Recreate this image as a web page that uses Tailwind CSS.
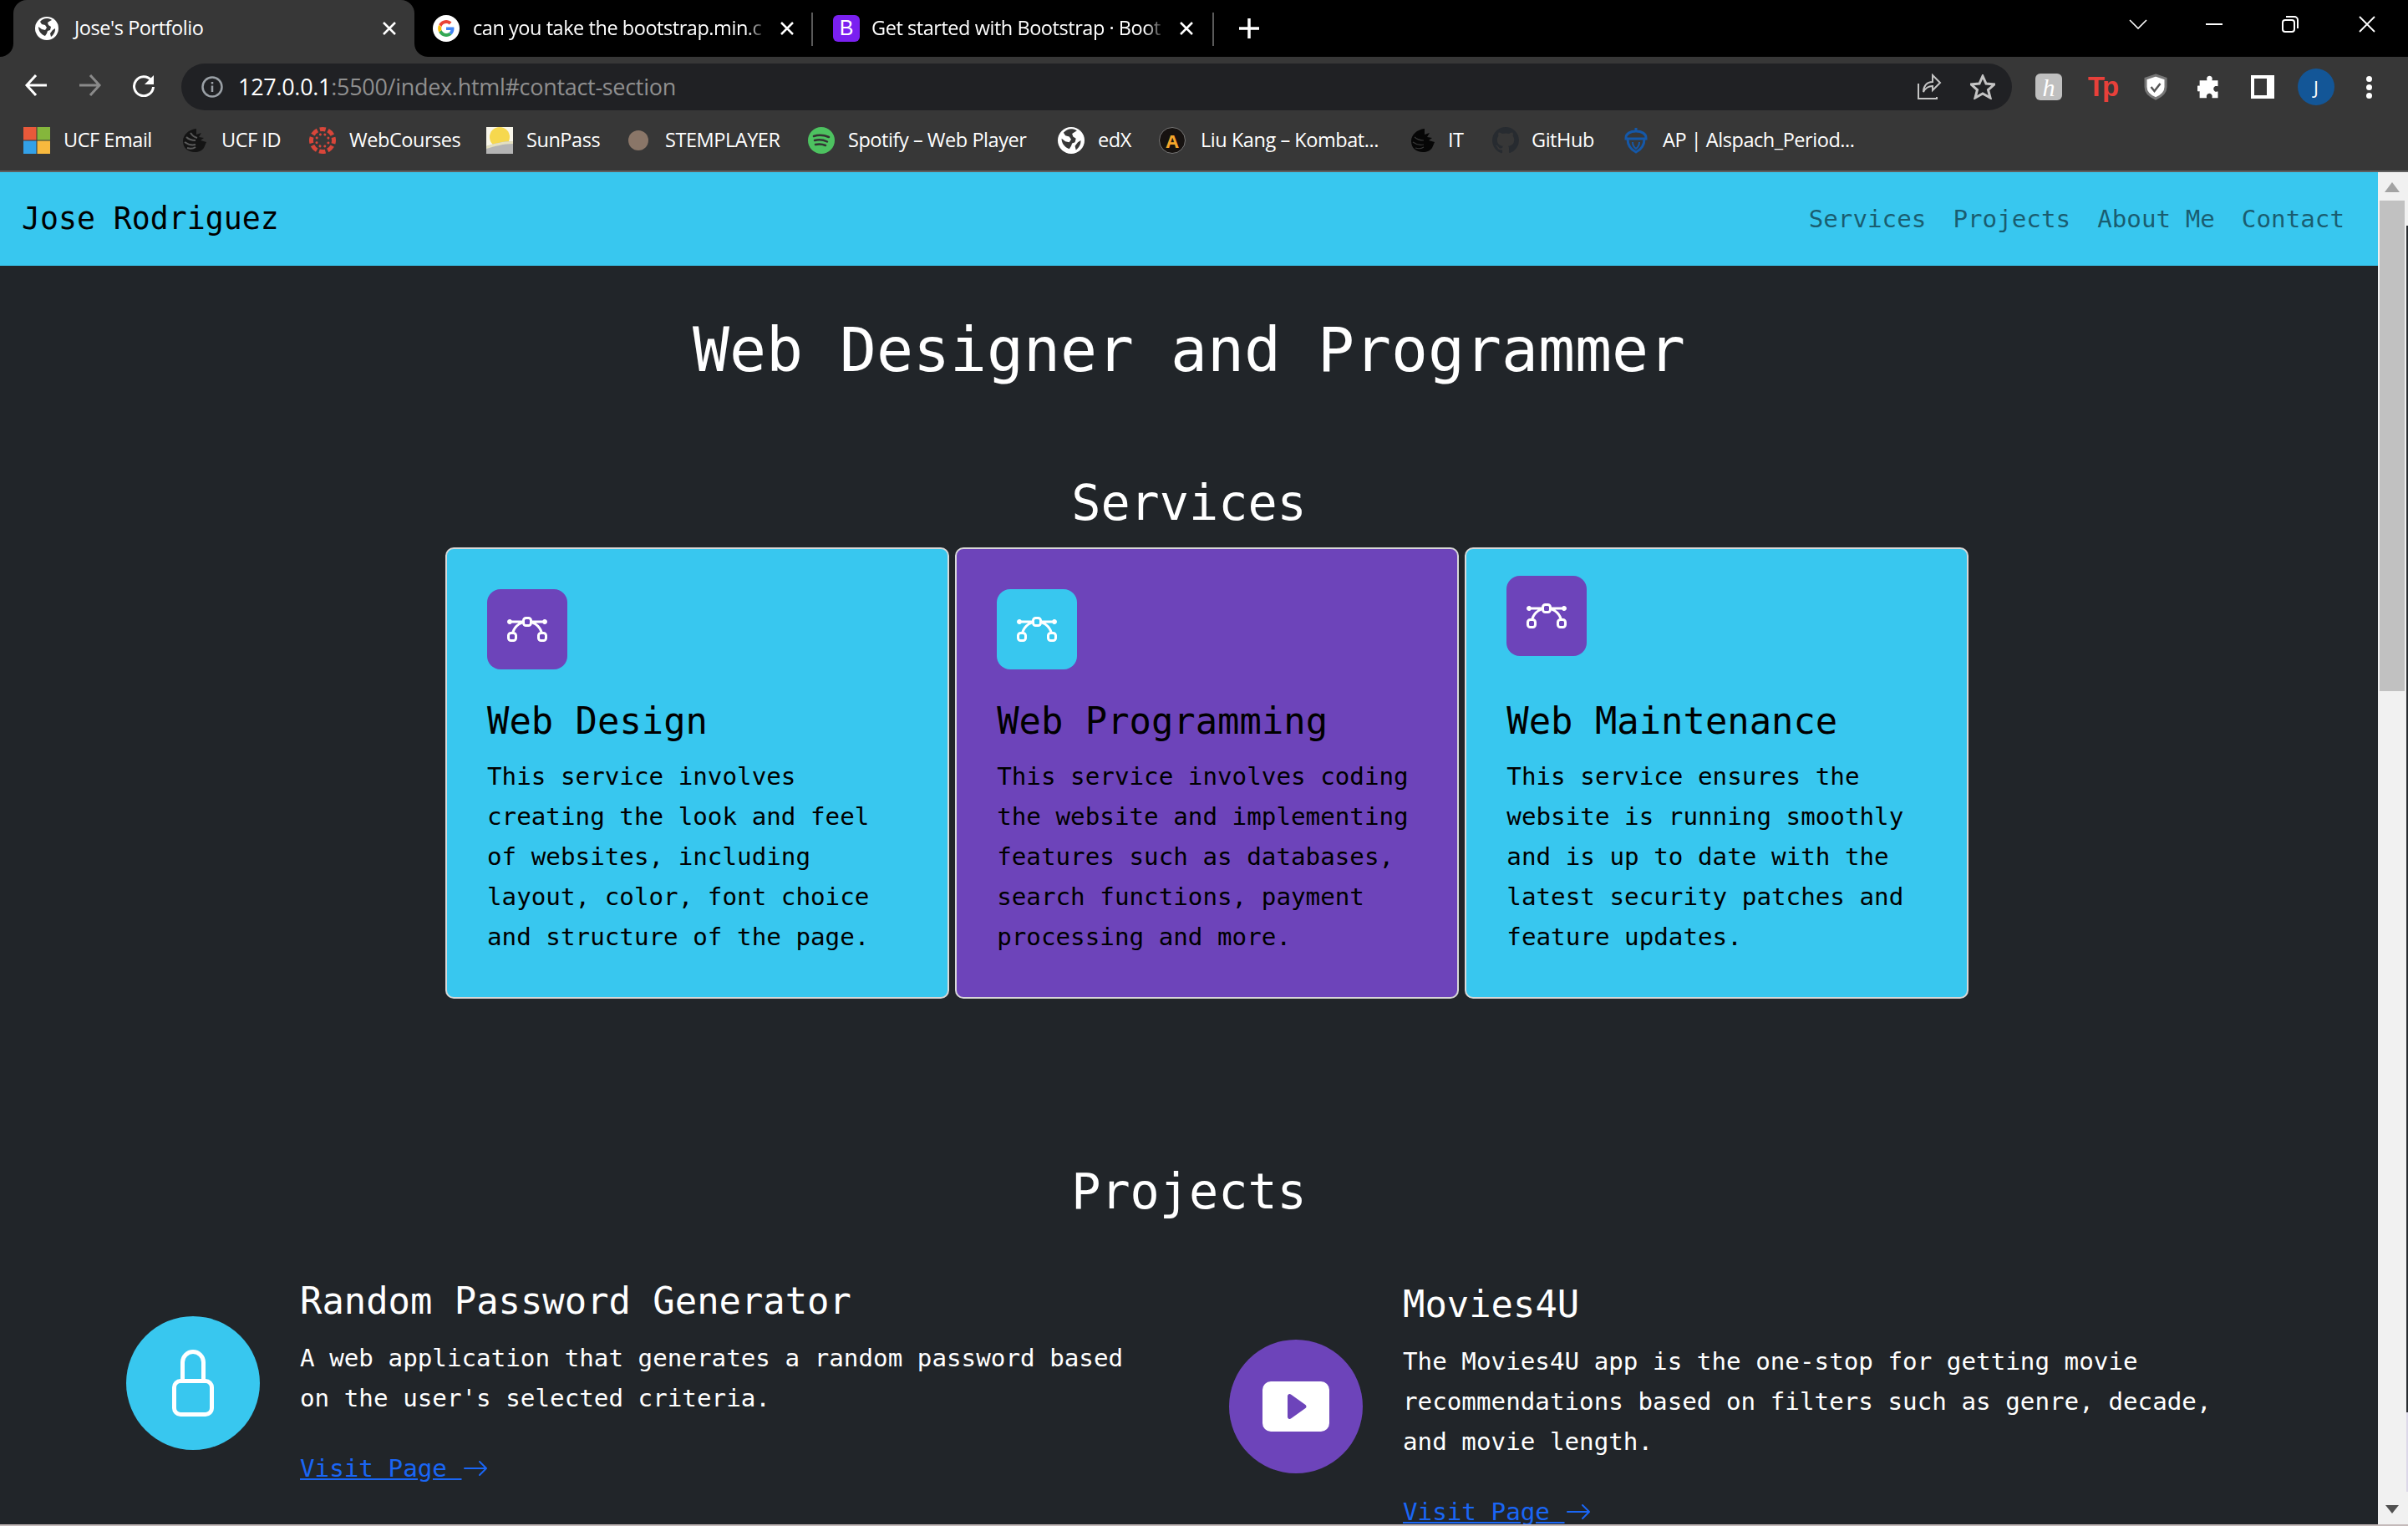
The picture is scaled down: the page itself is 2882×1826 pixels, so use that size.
<!DOCTYPE html>
<html lang="en">
<head>
<meta charset="utf-8">
<title>Jose's Portfolio</title>
<script src="https://cdn.jsdelivr.net/npm/@tailwindcss/browser@4"></script>
</head>
<body class="bg-black">
<div class="relative w-[2882px] h-[1826px] overflow-hidden flex flex-col bg-[#212529] font-['Open_Sans',sans-serif]">

  <!-- tab strip -->
  <div class="h-[68px] shrink-0 bg-black flex items-stretch text-white text-[23.5px] tracking-[-0.45px] pl-[16px]">
    <div class="relative w-[480px] bg-[#373737] rounded-t-[16px] flex items-center pl-[26px] pr-[22px]">
      <svg class="absolute left-[-16px] bottom-0 w-[16px] h-[16px]" viewBox="0 0 16 16"><path d="M16 0v16H0A16 16 0 0 0 16 0z" fill="#373737"/></svg>
      <svg class="absolute right-[-16px] bottom-0 w-[16px] h-[16px]" viewBox="0 0 16 16"><path d="M0 0v16h16A16 16 0 0 1 0 0z" fill="#373737"/></svg>
      <svg class="w-[28px] h-[28px] shrink-0" viewBox="0 0 28 28"><circle cx="14" cy="14" r="14" fill="#fff"/><path d="M14 2c-3 0-6 1.500-8 4l2 3 4 1 2 3-2 3-4-1-4-3c0 5 3 9 8 11l2-3 1-3 3-1 1-4-3-2-1-3 3-2 2-1c-1-1-3-2-5-2zM21 16l3-2c.400 4-2 8-5 10l-1-4z" fill="#373737"/></svg>
      <span class="ml-[19px] flex-1 whitespace-nowrap">Jose's Portfolio</span>
      <svg class="w-[16px] h-[16px]" viewBox="0 0 16 16"><path d="M1 1l14 14M15 1L1 15" stroke="#fff" stroke-width="2.500"/></svg>
    </div>
    <div class="relative w-[476px] flex items-center pl-[22px] pr-[22px]">
      <svg class="w-[32px] h-[32px] shrink-0" viewBox="0 0 32 32"><circle cx="16" cy="16" r="16" fill="#fff"/><path d="M25.500 16.300c0-.700-.100-1.300-.200-1.900H16v3.600h5.300c-.200 1.200-.900 2.300-2 3l3.200 2.500c1.900-1.700 3-4.300 3-7.200z" fill="#4285f4"/><path d="M16 26c2.700 0 4.900-.900 6.500-2.400l-3.200-2.500c-.900.600-2 1-3.300 1-2.500 0-4.700-1.700-5.500-4l-3.300 2.500C8.900 23.900 12.200 26 16 26z" fill="#34a853"/><path d="M10.500 18.100c-.400-1.200-.400-2.500 0-3.700l-3.300-2.600c-1.400 2.700-1.400 6 0 8.800z" fill="#fbbc05"/><path d="M16 10c1.400 0 2.700.500 3.700 1.400l2.800-2.800C20.800 7 18.500 6 16 6c-3.800 0-7.100 2.200-8.800 5.300l3.300 2.600c.800-2.300 3-3.900 5.500-3.900z" fill="#ea4335"/></svg>
      <span class="ml-[16px] w-[352px] shrink-0 overflow-hidden whitespace-nowrap [mask-image:linear-gradient(to_right,black_93%,transparent)]">can you take the bootstrap.min.c</span>
      <svg class="ml-[16px] w-[16px] h-[16px] shrink-0" viewBox="0 0 16 16"><path d="M1 1l14 14M15 1L1 15" stroke="#fff" stroke-width="2.500"/></svg>
      <div class="absolute left-[475px] top-[15px] w-[2px] h-[40px] bg-[#5a5a5a]"></div>
    </div>
    <div class="relative w-[480px] flex items-center pl-[25px]">
      <div class="w-[32px] h-[32px] shrink-0 rounded-[6px] bg-[#7a20f0] text-white flex items-center justify-center font-['Liberation_Sans',sans-serif] text-[25px] tracking-normal">B</div>
      <span class="ml-[14px] w-[352px] shrink-0 overflow-hidden whitespace-nowrap [mask-image:linear-gradient(to_right,black_93%,transparent)]">Get started with Bootstrap · Boot</span>
      <svg class="ml-[17px] w-[16px] h-[16px] shrink-0" viewBox="0 0 16 16"><path d="M1 1l14 14M15 1L1 15" stroke="#fff" stroke-width="2.500"/></svg>
      <div class="absolute left-[479px] top-[15px] w-[2px] h-[40px] bg-[#5a5a5a]"></div>
      <svg class="absolute left-[511px] top-[22px] w-[24px] h-[24px]" viewBox="0 0 24 24"><path d="M12 0v24M0 12h24" stroke="#fff" stroke-width="3.500"/></svg>
    </div>
    <div class="flex-1"></div>
  </div>
  <!-- window controls lie over the strip -->
  <svg class="absolute left-[2548px] top-[23px] w-[22px] h-[12px]" viewBox="0 0 22 12"><path d="M1 1l10 10L21 1" fill="none" stroke="#fff" stroke-width="1.600"/></svg>
  <div class="absolute left-[2640px] top-[28px] w-[20px] h-[2px] bg-white"></div>
  <svg class="absolute left-[2731px] top-[19px] w-[20px] h-[20px]" viewBox="0 0 20 20"><rect x="1" y="5" width="14" height="14" rx="3" fill="none" stroke="#fff" stroke-width="2"/><path d="M5 1h10a4 4 0 0 1 4 4v10" fill="none" stroke="#fff" stroke-width="2"/></svg>
  <svg class="absolute left-[2823px] top-[19px] w-[20px] h-[20px]" viewBox="0 0 20 20"><path d="M1 1l18 18M19 1L1 19" stroke="#fff" stroke-width="1.800"/></svg>

  <!-- toolbar -->
  <div class="h-[72px] shrink-0 bg-[#373737] flex items-start pt-[8px] relative">
    <div class="w-[217px] h-[56px] relative shrink-0">
      <svg class="absolute left-[29px] top-[12px] w-[28px] h-[28px]" viewBox="0 0 28 28"><path d="M14 2L3 14l11 12M3 14h24" fill="none" stroke="#fff" stroke-width="3"/></svg>
      <svg class="absolute left-[94px] top-[12px] w-[28px] h-[28px]" viewBox="0 0 28 28"><path d="M14 2l11 12-11 12M25 14H1" fill="none" stroke="#8a8a8a" stroke-width="3"/></svg>
      <svg class="absolute left-[158px] top-[12px] w-[28px] h-[28px]" viewBox="0 0 28 28"><path d="M23 8a11.500 11.500 0 1 0 2.500 8" fill="none" stroke="#fff" stroke-width="3"/><path d="M26 2v11H15z" fill="#fff"/></svg>
    </div>
    <div class="w-[2191px] h-[56px] bg-[#202124] rounded-full flex items-center pl-[24px] pr-[20px] shrink-0">
      <svg class="w-[26px] h-[26px] shrink-0" viewBox="0 0 26 26"><circle cx="13" cy="13" r="11.500" fill="none" stroke="#9aa0a6" stroke-width="2.500"/><path d="M13 11.500V19M13 7v2.500" stroke="#9aa0a6" stroke-width="2.500"/></svg>
      <span class="ml-[18px] text-[27px] tracking-[-0.3px] whitespace-nowrap text-white">127.0.0.1<span class="text-[#8f8f8f]">:5500/index.html#contact-section</span></span>
      <div class="flex-1"></div>
      <svg class="w-[30px] h-[32px] shrink-0" viewBox="0 0 30 32"><path d="M2 12v18h22v-2" fill="none" stroke="#c4c4c4" stroke-width="2"/><path d="M19 2l9 9-9 9v-5c-6 0-9 3-11 7 0-7 4-12 11-12z" fill="none" stroke="#c4c4c4" stroke-width="2"/></svg>
      <svg class="ml-[34px] w-[30px] h-[30px] shrink-0" viewBox="0 0 30 30"><path d="M15 2l4 9 10 1-7.500 6.500L24 28l-9-5-9 5 2.500-9.500L1 12l10-1z" fill="none" stroke="#c4c4c4" stroke-width="3"/></svg>
    </div>
    <div class="w-[474px] h-[56px] flex items-center pl-[28px] shrink-0 gap-[32px]">
      <div class="w-[32px] h-[32px] rounded-[6px] bg-[#bfbfbf] flex items-center justify-center text-white italic font-['Liberation_Serif',serif] text-[30px]">h</div>
      <div class="w-[32px] h-[32px] flex items-center justify-center text-[#e8403a] font-bold text-[33px] tracking-[-3px] font-['Liberation_Sans',sans-serif]">Tp</div>
      <svg class="w-[32px] h-[32px]" viewBox="0 0 32 32"><path d="M16 2l12 4v10c0 7-5 11-12 14C9 27 4 23 4 16V6z" fill="#fff" stroke="#777" stroke-width="3"/><path d="M10.500 16l4 5 7-9" fill="none" stroke="#555" stroke-width="2.500"/></svg>
      <div class="w-[32px] h-[32px] flex items-center justify-center"><svg class="w-[28px] h-[28px]" viewBox="0 0 32 32"><path d="M13 3a4 4 0 0 1 7 0c.600 1 0 3 0 4h8v8c-1 0-3-.500-4 .200a4 4 0 0 0 0 7c1 .700 3 .200 4 .200V31h-8c0-1 .500-3-.200-4a4 4 0 0 0-7 0c-.700 1-.200 3-.200 4H3v-9c-1 0-2 .500-3-.200a4 4 0 0 1 0-7c1-.700 2-.200 3-.200V7h10c0-1-.600-3 0-4z" fill="#fff"/></svg></div>
      <div class="w-[32px] h-[32px] flex items-center justify-center"><svg class="w-[28px] h-[28px]" viewBox="0 0 28 28"><path d="M0 0h28v28H0zM4 4v20h15V4z" fill="#fff" fill-rule="evenodd"/></svg></div>
      <div class="ml-[-6px] w-[44px] h-[44px] rounded-full bg-[#135697] text-white flex items-center justify-center text-[22px]">J</div>
      <div class="ml-[6px] flex flex-col gap-[3px]"><div class="w-[7px] h-[7px] rounded-full bg-white"></div><div class="w-[7px] h-[7px] rounded-full bg-white"></div><div class="w-[7px] h-[7px] rounded-full bg-white"></div></div>
    </div>
  </div>

  <!-- bookmarks -->
  <div class="h-[66px] shrink-0 bg-[#373737] border-b-[2px] border-[#5f5f5f] flex items-center pl-[28px] pb-[8px] text-white text-[23.5px] tracking-[-0.45px] whitespace-nowrap">
    <div class="w-[189px] flex items-center gap-[16px] shrink-0">
      <svg class="w-[32px] h-[32px]" viewBox="0 0 32 32"><path d="M0 0h15.500v15.500H0z" fill="#e8593a"/><path d="M16.500 0H32v15.500H16.500z" fill="#85b63c"/><path d="M0 16.500h15.500V32H0z" fill="#33a1e8"/><path d="M16.500 16.500H32V32H16.500z" fill="#f8b93e"/></svg>
      <span>UCF Email</span>
    </div>
    <div class="w-[153px] flex items-center gap-[16px] shrink-0">
      <svg class="w-[32px] h-[32px]" viewBox="0 0 32 32"><path d="M18 2C9 3 2 9 2 17c0 8 6 13 14 13 5 0 9-2 11-5l3-7-7-2 4-3-6-1 3-5-6 2z" fill="#141414"/><path d="M6 12c3 3 7 4 11 4M4 18c4 3 9 4 13 3M7 25c3 1 7 1 10-1M11 7c2 3 4 5 8 6" fill="none" stroke="#5a5a5a" stroke-width="2"/></svg>
      <span>UCF ID</span>
    </div>
    <div class="w-[212px] flex items-center gap-[16px] shrink-0">
      <svg class="w-[32px] h-[32px]" viewBox="0 0 32 32"><circle cx="16" cy="16" r="13.500" fill="none" stroke="#d9463a" stroke-width="5" stroke-dasharray="7.600 3" stroke-dashoffset="3.800" transform="rotate(-90 16 16)"/><circle cx="16" cy="16" r="7.500" fill="none" stroke="#d9463a" stroke-width="3" stroke-linecap="round" stroke-dasharray="0 5.890" transform="rotate(-67.500 16 16)"/></svg>
      <span>WebCourses</span>
    </div>
    <div class="w-[166px] flex items-center gap-[16px] shrink-0">
      <svg class="w-[32px] h-[32px]" viewBox="0 0 32 32"><path d="M0 0h32v32H0z" fill="#f8f6ea"/><circle cx="16" cy="12" r="12" fill="#f6d84e"/><path d="M0 32V23c9-3 20-6 32-6v15z" fill="#b4b4b4"/><path d="M0 23c9-3 20-6 32-6v3c-11 0-22 3-32 6z" fill="#e4e0c0"/></svg>
      <span>SunPass</span>
    </div>
    <div class="w-[219px] flex items-center gap-[16px] shrink-0">
      <div class="w-[32px] h-[32px] flex justify-center"><div class="w-[24px] h-[24px] mt-[4px] rounded-full bg-[#8a7668]"></div></div>
      <span>STEMPLAYER</span>
    </div>
    <div class="w-[299px] flex items-center gap-[16px] shrink-0">
      <svg class="w-[32px] h-[32px]" viewBox="0 0 32 32"><circle cx="16" cy="16" r="16" fill="#4dc260"/><path d="M7 11c6-2 12-1.500 18 1M8 16c5-1.500 10-1 15 1.500M9 21c4-1 8-.700 12 1" fill="none" stroke="#333" stroke-width="2.500" stroke-linecap="round"/></svg>
      <span>Spotify – Web Player</span>
    </div>
    <div class="w-[121px] flex items-center gap-[16px] shrink-0">
      <svg class="w-[32px] h-[32px]" viewBox="0 0 28 28"><circle cx="14" cy="14" r="14" fill="#fff"/><path d="M14 2c-3 0-6 1.500-8 4l2 3 4 1 2 3-2 3-4-1-4-3c0 5 3 9 8 11l2-3 1-3 3-1 1-4-3-2-1-3 3-2 2-1c-1-1-3-2-5-2zM21 16l3-2c.400 4-2 8-5 10l-1-4z" fill="#373737"/></svg>
      <span>edX</span>
    </div>
    <div class="w-[300px] flex items-center gap-[18px] shrink-0">
      <div class="w-[32px] h-[32px] rounded-full bg-[#161210] border border-[#777] flex items-center justify-center text-[#f4a52b] font-bold text-[22px] tracking-normal">A</div>
      <span>Liu Kang – Kombat...</span>
    </div>
    <div class="w-[99px] flex items-center gap-[14px] shrink-0">
      <svg class="w-[32px] h-[32px]" viewBox="0 0 32 32"><path d="M18 2C9 3 2 9 2 17c0 8 6 13 14 13 5 0 9-2 11-5l3-7-7-2 4-3-6-1 3-5-6 2z" fill="#060606"/><path d="M6 12c3 3 7 4 11 4M4 18c4 3 9 4 13 3M7 25c3 1 7 1 10-1" fill="none" stroke="#373737" stroke-width="1.200"/></svg>
      <span>IT</span>
    </div>
    <div class="w-[156px] flex items-center gap-[15px] shrink-0">
      <svg class="w-[32px] h-[32px]" viewBox="0 0 16 16"><path fill="#272b30" d="M8 0C3.580 0 0 3.580 0 8c0 3.540 2.290 6.530 5.470 7.590.400.070.550-.170.550-.410 0-.200-.010-.860-.010-1.560-2.010.370-2.530-.490-2.690-.940-.090-.230-.480-.940-.820-1.130-.280-.150-.680-.520-.010-.530.630-.010 1.080.580 1.230.820.720 1.210 1.870.870 2.330.660.070-.520.280-.870.510-1.070-1.780-.200-3.640-.890-3.640-3.950 0-.870.310-1.590.820-2.150-.080-.200-.360-1.020.080-2.120 0 0 .670-.210 2.200.820.640-.180 1.320-.270 2-.270.680 0 1.360.090 2 .270 1.530-1.040 2.200-.820 2.200-.820.440 1.100.160 1.920.080 2.120.510.560.820 1.270.820 2.150 0 3.070-1.870 3.750-3.650 3.950.290.250.540.730.540 1.480 0 1.070-.010 1.930-.010 2.200 0 .210.150.460.550.380A8.013 8.013 0 0016 8c0-4.420-3.580-8-8-8z"/></svg>
      <span>GitHub</span>
    </div>
    <div class="flex items-center gap-[16px] shrink-0">
      <svg class="w-[32px] h-[32px]" viewBox="0 0 32 32"><path d="M16 1v4" stroke="#1558a8" stroke-width="3"/><path d="M4 13c0-5 5-8 12-8s12 3 12 8v1H4z" fill="none" stroke="#1558a8" stroke-width="3"/><path d="M6 14c0 8 4 13 10 16 6-3 10-8 10-16" fill="none" stroke="#1558a8" stroke-width="3"/><path d="M12 18c0 3 1.500 6 4 8 2.500-2 4-5 4-8" fill="none" stroke="#1558a8" stroke-width="2"/></svg>
      <span>AP | Alspach_Period...</span>
    </div>
  </div>

  <!-- page area -->
  <div class="flex-1 flex min-h-0">
    <main class="w-[2846px] shrink-0 overflow-hidden bg-[#212529] text-white font-['DejaVu_Sans_Mono',monospace] text-[29.23px] leading-[48px]">
      <nav class="h-[112px] bg-[#38c7ef] flex items-center justify-between pl-[26px] pr-[24px]">
        <span class="text-black text-[36.5px]">Jose Rodriguez</span>
        <div class="flex text-black/55">
          <a class="px-[16px]">Services</a><a class="px-[16px]">Projects</a><a class="px-[16px]">About Me</a><a class="px-[16px]">Contact</a>
        </div>
      </nav>

      <h1 class="mt-[51px] text-center text-[73.1px] leading-[100px] whitespace-nowrap">Web Designer and Programmer</h1>
      <h2 class="mt-[95px] text-center text-[58.47px] leading-[77px]">Services</h2>

      <div class="mt-[14px] ml-[533px] w-[1823px] grid grid-cols-3 gap-[7.500px] text-black">
        <div class="h-[540px] rounded-[10px] border-[2px] border-[#d8d8d8] bg-[#38c7ef] px-[48px] pt-[48px]">
          <div class="w-[96px] h-[96px] rounded-[16px] bg-[#6d44ba] flex items-center justify-center">
            <svg class="w-[48px] h-[48px]" viewBox="0 0 16 16" fill="#fff"><path fill-rule="evenodd" d="M0 10.500A1.500 1.500 0 0 1 1.500 9h1A1.500 1.500 0 0 1 4 10.500v1A1.500 1.500 0 0 1 2.500 13h-1A1.500 1.500 0 0 1 0 11.500v-1zm1.500-.500a.5.5 0 0 0-.5.5v1a.5.5 0 0 0 .5.5h1a.5.5 0 0 0 .5-.5v-1a.5.5 0 0 0-.5-.5h-1zm10.500.5A1.500 1.500 0 0 1 13.500 9h1a1.500 1.500 0 0 1 1.500 1.500v1a1.500 1.500 0 0 1-1.500 1.500h-1a1.500 1.500 0 0 1-1.500-1.500v-1zm1.500-.5a.5.5 0 0 0-.5.5v1a.5.5 0 0 0 .5.5h1a.5.5 0 0 0 .5-.5v-1a.5.5 0 0 0-.5-.5h-1zM6 4.500A1.500 1.500 0 0 1 7.500 3h1A1.500 1.500 0 0 1 10 4.500v1A1.500 1.500 0 0 1 8.500 7h-1A1.500 1.500 0 0 1 6 5.500v-1zM7.500 4a.5.5 0 0 0-.5.5v1a.5.5 0 0 0 .5.5h1a.5.5 0 0 0 .5-.5v-1a.5.5 0 0 0-.5-.5h-1z"/><path d="M6 4.500H1.866a1 1 0 1 0 0 1h2.668A6.517 6.517 0 0 0 1.814 9H2.500c.123 0 .244.015.358.043a5.517 5.517 0 0 1 3.185-3.185A1.503 1.503 0 0 1 6 5.500v-1zm3.957 1.358A1.500 1.500 0 0 0 10 5.500v-1h4.134a1 1 0 1 1 0 1h-2.668a6.517 6.517 0 0 1 2.720 3.500H13.500c-.123 0-.243.015-.358.043a5.517 5.517 0 0 0-3.185-3.185z"/></svg>
          </div>
          <h3 class="mt-[33px] text-[43.85px] leading-[58px]">Web Design</h3>
          <p class="mt-[13px]">This service involves<br>creating the look and feel<br>of websites, including<br>layout, color, font choice<br>and structure of the page.</p>
        </div>
        <div class="h-[540px] rounded-[10px] border-[2px] border-[#d8d8d8] bg-[#6d44ba] px-[48px] pt-[48px]">
          <div class="w-[96px] h-[96px] rounded-[16px] bg-[#38c7ef] flex items-center justify-center">
            <svg class="w-[48px] h-[48px]" viewBox="0 0 16 16" fill="#fff"><path fill-rule="evenodd" d="M0 10.500A1.500 1.500 0 0 1 1.500 9h1A1.500 1.500 0 0 1 4 10.500v1A1.500 1.500 0 0 1 2.500 13h-1A1.500 1.500 0 0 1 0 11.500v-1zm1.500-.500a.5.5 0 0 0-.5.5v1a.5.5 0 0 0 .5.5h1a.5.5 0 0 0 .5-.5v-1a.5.5 0 0 0-.5-.5h-1zm10.500.5A1.500 1.500 0 0 1 13.500 9h1a1.500 1.500 0 0 1 1.500 1.500v1a1.500 1.500 0 0 1-1.500 1.500h-1a1.500 1.500 0 0 1-1.500-1.500v-1zm1.500-.5a.5.5 0 0 0-.5.5v1a.5.5 0 0 0 .5.5h1a.5.5 0 0 0 .5-.5v-1a.5.5 0 0 0-.5-.5h-1zM6 4.500A1.500 1.500 0 0 1 7.500 3h1A1.500 1.500 0 0 1 10 4.500v1A1.500 1.500 0 0 1 8.500 7h-1A1.500 1.500 0 0 1 6 5.500v-1zM7.500 4a.5.5 0 0 0-.5.5v1a.5.5 0 0 0 .5.5h1a.5.5 0 0 0 .5-.5v-1a.5.5 0 0 0-.5-.5h-1z"/><path d="M6 4.500H1.866a1 1 0 1 0 0 1h2.668A6.517 6.517 0 0 0 1.814 9H2.500c.123 0 .244.015.358.043a5.517 5.517 0 0 1 3.185-3.185A1.503 1.503 0 0 1 6 5.500v-1zm3.957 1.358A1.500 1.500 0 0 0 10 5.500v-1h4.134a1 1 0 1 1 0 1h-2.668a6.517 6.517 0 0 1 2.720 3.500H13.500c-.123 0-.243.015-.358.043a5.517 5.517 0 0 0-3.185-3.185z"/></svg>
          </div>
          <h3 class="mt-[33px] text-[43.85px] leading-[58px]">Web Programming</h3>
          <p class="mt-[13px]">This service involves coding<br>the website and implementing<br>features such as databases,<br>search functions, payment<br>processing and more.</p>
        </div>
        <div class="h-[540px] rounded-[10px] border-[2px] border-[#d8d8d8] bg-[#38c7ef] px-[48px] pt-[32px]">
          <div class="w-[96px] h-[96px] rounded-[16px] bg-[#6d44ba] flex items-center justify-center">
            <svg class="w-[48px] h-[48px]" viewBox="0 0 16 16" fill="#fff"><path fill-rule="evenodd" d="M0 10.500A1.500 1.500 0 0 1 1.500 9h1A1.500 1.500 0 0 1 4 10.500v1A1.500 1.500 0 0 1 2.500 13h-1A1.500 1.500 0 0 1 0 11.500v-1zm1.500-.500a.5.5 0 0 0-.5.5v1a.5.5 0 0 0 .5.5h1a.5.5 0 0 0 .5-.5v-1a.5.5 0 0 0-.5-.5h-1zm10.500.5A1.500 1.500 0 0 1 13.500 9h1a1.500 1.500 0 0 1 1.500 1.500v1a1.500 1.500 0 0 1-1.500 1.500h-1a1.500 1.500 0 0 1-1.500-1.500v-1zm1.500-.5a.5.5 0 0 0-.5.5v1a.5.5 0 0 0 .5.5h1a.5.5 0 0 0 .5-.5v-1a.5.5 0 0 0-.5-.5h-1zM6 4.500A1.500 1.500 0 0 1 7.500 3h1A1.500 1.500 0 0 1 10 4.500v1A1.500 1.500 0 0 1 8.500 7h-1A1.500 1.500 0 0 1 6 5.500v-1zM7.500 4a.5.5 0 0 0-.5.5v1a.5.5 0 0 0 .5.5h1a.5.5 0 0 0 .5-.5v-1a.5.5 0 0 0-.5-.5h-1z"/><path d="M6 4.500H1.866a1 1 0 1 0 0 1h2.668A6.517 6.517 0 0 0 1.814 9H2.500c.123 0 .244.015.358.043a5.517 5.517 0 0 1 3.185-3.185A1.503 1.503 0 0 1 6 5.500v-1zm3.957 1.358A1.500 1.500 0 0 0 10 5.500v-1h4.134a1 1 0 1 1 0 1h-2.668a6.517 6.517 0 0 1 2.720 3.500H13.500c-.123 0-.243.015-.358.043a5.517 5.517 0 0 0-3.185-3.185z"/></svg>
          </div>
          <h3 class="mt-[49px] text-[43.85px] leading-[58px]">Web Maintenance</h3>
          <p class="mt-[13px]">This service ensures the<br>website is running smoothly<br>and is up to date with the<br>latest security patches and<br>feature updates.</p>
        </div>
      </div>

      <h2 class="mt-[193px] text-center text-[58.47px] leading-[77px]">Projects</h2>

      <div class="mt-[63px] ml-[103px] w-[2640px] grid grid-cols-2 items-start">
        <div class="flex items-center pl-[48px] pr-[48px]">
          <div class="w-[160px] h-[160px] shrink-0 rounded-full bg-[#38c7ef] flex items-center justify-center">
            <svg class="w-[80px] h-[80px]" viewBox="0 0 16 16" fill="#fff"><path d="M8 1a2 2 0 0 1 2 2v4H6V3a2 2 0 0 1 2-2zm3 6V3a3 3 0 0 0-6 0v4a2 2 0 0 0-2 2v5a2 2 0 0 0 2 2h6a2 2 0 0 0 2-2V9a2 2 0 0 0-2-2zM5 8h6a1 1 0 0 1 1 1v5a1 1 0 0 1-1 1H5a1 1 0 0 1-1-1V9a1 1 0 0 1 1-1z"/></svg>
          </div>
          <div class="ml-[48px]">
            <h3 class="text-[43.85px] leading-[58px]">Random Password Generator</h3>
            <p class="mt-[15px]">A web application that generates a random password based on the user's selected criteria.</p>
            <a class="mt-[36px] flex items-center text-[#1a66f5]"><span class="underline whitespace-pre">Visit Page </span><svg class="w-[32px] h-[32px]" viewBox="0 0 16 16" fill="currentColor"><path fill-rule="evenodd" d="M1 8a.5.5 0 0 1 .5-.5h11.793l-3.147-3.146a.5.5 0 0 1 .708-.708l4 4a.5.5 0 0 1 0 .708l-4 4a.5.5 0 0 1-.708-.708L13.293 8.500H1.500A.5.5 0 0 1 1 8z"/></svg></a>
          </div>
        </div>
        <div class="mt-[4px] flex items-center pl-[48px] pr-[48px]">
          <div class="w-[160px] h-[160px] shrink-0 rounded-full bg-[#6d44ba] flex items-center justify-center">
            <svg class="w-[80px] h-[80px]" viewBox="0 0 16 16" fill="#fff"><path d="M0 12V4a2 2 0 0 1 2-2h12a2 2 0 0 1 2 2v8a2 2 0 0 1-2 2H2a2 2 0 0 1-2-2zm6.790-6.907A.5.5 0 0 0 6 5.500v5a.5.5 0 0 0 .790.407l3.500-2.500a.5.5 0 0 0 0-.814l-3.500-2.500z"/></svg>
          </div>
          <div class="ml-[48px]">
            <h3 class="text-[43.85px] leading-[58px]">Movies4U</h3>
            <p class="mt-[15px]">The Movies4U app is the one-stop for getting movie recommendations based on filters such as genre, decade, and movie length.</p>
            <a class="mt-[36px] flex items-center text-[#1a66f5]"><span class="underline whitespace-pre">Visit Page </span><svg class="w-[32px] h-[32px]" viewBox="0 0 16 16" fill="currentColor"><path fill-rule="evenodd" d="M1 8a.5.5 0 0 1 .5-.5h11.793l-3.147-3.146a.5.5 0 0 1 .708-.708l4 4a.5.5 0 0 1 0 .708l-4 4a.5.5 0 0 1-.708-.708L13.293 8.500H1.500A.5.5 0 0 1 1 8z"/></svg></a>
          </div>
        </div>
      </div>
    </main>

    <!-- scrollbar -->
    <div class="relative w-[36px] shrink-0 bg-[#f1f1f1]">
      <svg class="absolute left-[8px] top-[12px] w-[18px] h-[12px]" viewBox="0 0 18 12"><path d="M9 0l9 12H0z" fill="#a3a3a3"/></svg>
      <div class="absolute left-[2px] top-[34px] w-[30px] h-[587px] bg-[#c1c1c1]"></div>
      <svg class="absolute left-[9px] top-[1595px] w-[16px] h-[10px]" viewBox="0 0 16 10"><path d="M0 0h16L8 10z" fill="#505050"/></svg>
      <div class="absolute right-0 top-[64px] w-[2px] h-[1420px] bg-[#2a2d31]"></div>
      <div class="absolute right-0 top-[1484px] w-[2px] h-[95px] bg-[#dcd8e8]"></div>
    </div>
  </div>
  <div class="h-[2px] shrink-0 bg-[#c4baba]"></div>
</div>
</body>
</html>
